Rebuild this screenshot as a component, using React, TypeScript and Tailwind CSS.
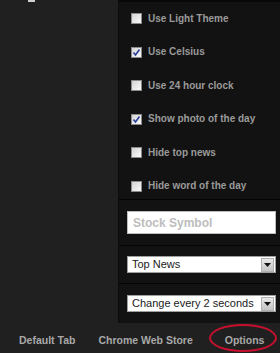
import React from "react";

const font = { fontFamily: '"Liberation Sans", Arial, sans-serif' };

function Box({ checked }: { checked: boolean }) {
  return (
    <div className="w-[11px] h-[11px] border border-[#8a8a8a] bg-gradient-to-br from-[#d4d4d4] to-[#fafafa] flex items-center justify-center shrink-0">
      {checked && (
        <svg width="9" height="9" viewBox="0 0 9 9">
          <path d="M1.5 4.5 L3.5 7 L7.5 1.5" fill="none" stroke="#2a3f9a" strokeWidth="1.6" />
        </svg>
      )}
    </div>
  );
}

function Row({ label, checked }: { label: string; checked: boolean }) {
  return (
    <div className="h-[33.5px] flex items-center pl-[12px] gap-[6px] shrink-0">
      <Box checked={checked} />
      <span className="text-[10px] font-bold text-[#9a9a9a] leading-none whitespace-nowrap">{label}</span>
    </div>
  );
}

function Select({ label }: { label: string }) {
  return (
    <div className="w-[149px] h-[17px] bg-white border border-[#a0a0a0] flex items-center ml-[8px]">
      <span className="flex-1 pl-[4px] text-[11px] text-[#1a1a1a] leading-none whitespace-nowrap overflow-hidden">{label}</span>
      <div className="w-[13px] h-[14px] mr-[1px] bg-gradient-to-b from-[#e8e8e8] to-[#c4c4c4] border border-[#b0b0b0] flex items-center justify-center">
        <svg width="7" height="4" viewBox="0 0 7 4">
          <path d="M0 0 L7 0 L3.5 4 Z" fill="#111" />
        </svg>
      </div>
    </div>
  );
}

export default function App() {
  const rows: [string, boolean][] = [
    ["Use Light Theme", false],
    ["Use Celsius", true],
    ["Use 24 hour clock", false],
    ["Show photo of the day", true],
    ["Hide top news", false],
    ["Hide word of the day", false],
  ];
  return (
    <div className="w-[280px] h-[353px] bg-[#202020] flex flex-col overflow-hidden" style={font}>
      <div className="flex h-[323px]">
        <div className="w-[118px] shrink-0">
          <div className="ml-[28px] w-[7px] h-[2px] bg-[#d0d0d0]" />
        </div>
        <div className="flex-1 bg-[#121212] border-l border-[#0c0c0c] border-t-2 border-t-[#080808] flex flex-col">
          <div className="h-[198px] flex flex-col border-b border-[#050505]">
            {rows.map(([l, c]) => (
              <Row key={l} label={l} checked={c} />
            ))}
          </div>
          <div className="h-[46px] flex items-center border-b border-[#050505]">
            <div className="w-[149px] h-[23px] bg-white border border-[#bdbdbd] ml-[8px] flex items-center pl-[5px]">
              <span className="text-[12px] font-bold text-[#bdbdbd] leading-none">Stock Symbol</span>
            </div>
          </div>
          <div className="h-[38px] flex items-center border-b border-[#050505]">
            <Select label="Top News" />
          </div>
          <div className="flex-1 flex items-center">
            <Select label="Change every 2 seconds" />
          </div>
        </div>
      </div>
      <div className="flex-1 relative flex items-end pb-[4px] text-[10.5px] font-bold text-[#a8a8a8] whitespace-nowrap">
        <span className="ml-[19px]">Default Tab</span>
        <span className="ml-[23px]">Chrome Web Store</span>
        <span className="ml-[32px]">Options</span>
        <span className="absolute left-[209px] top-[1px] w-[68px] h-[28px] rounded-[50%] border-2 border-[#c8102e]" />
      </div>
    </div>
  );
}
